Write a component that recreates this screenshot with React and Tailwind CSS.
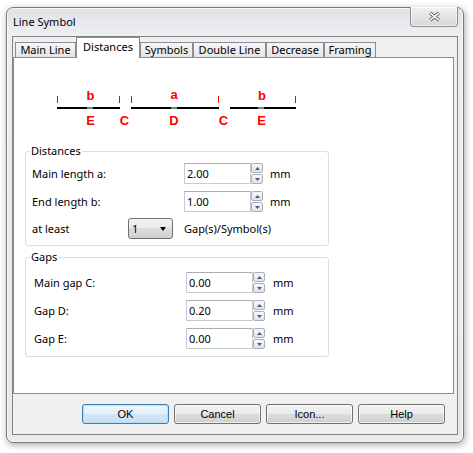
// Line Symbol dialog – "Distances" tab
function Spinner() {
  return (
    <div className="flex flex-col gap-px w-[12px] h-[21px]">
      <div className="h-[10px] border border-[#a9afb8] rounded-[2px] bg-[linear-gradient(to_bottom,#f7f8fa,#dfe4ea)] flex items-center justify-center">
        <svg width="5" height="3" viewBox="0 0 5 3">
          <path d="M2.5 0L5 3H0z" fill="#4a5a78" />
        </svg>
      </div>
      <div className="h-[10px] border border-[#a9afb8] rounded-[2px] bg-[linear-gradient(to_bottom,#f7f8fa,#dfe4ea)] flex items-center justify-center">
        <svg width="5" height="3" viewBox="0 0 5 3">
          <path d="M0 0H5L2.5 3z" fill="#4a5a78" />
        </svg>
      </div>
    </div>
  );
}

function NumberField({ value }) {
  return (
    <div className="flex items-center">
      <div className="w-[67px] h-[21px] border border-[#c5cad0] border-t-[#abadb3] bg-white flex items-center pl-[2px] leading-[16px]">
        {value}
      </div>
      <Spinner />
    </div>
  );
}

function Row({ label, value, labelW, gap, className = "" }) {
  return (
    <div className={"flex items-center h-[21px] " + className}>
      <span className={labelW + " leading-[16px]"}>{label}</span>
      <NumberField value={value} />
      <span className={gap + " leading-[16px]"}>mm</span>
    </div>
  );
}

function Tab({ label, w, active }) {
  if (active) {
    return (
      <div
        className={
          w +
          " h-[21px] -mb-px relative z-10 bg-white border border-b-0 border-[#898c95] flex justify-center pt-[1px] leading-[16px]"
        }
      >
        {label}
      </div>
    );
  }
  return (
    <div
      className={
        w +
        " h-[15px] border border-b-0 border-[#898c95] bg-[linear-gradient(to_bottom,#f6f6f6,#e6e6e6)] flex justify-center items-center leading-[16px]"
      }
    >
      {label}
    </div>
  );
}

function Button({ label, primary }) {
  return (
    <div
      className={
        "w-[87px] h-[20px] rounded-[3px] border flex items-center justify-center font-['Liberation_Sans',sans-serif] text-[11px] " +
        (primary
          ? "border-[#3c7fb1] bg-[linear-gradient(to_bottom,#eef6fc,#e3f0fa_50%,#d2e6f6_50%,#c8e0f3)] shadow-[inset_0_0_0_1px_rgba(170,220,250,0.8)]"
          : "border-[#707070] bg-[linear-gradient(to_bottom,#f2f2f2,#ebebeb_50%,#dddddd_50%,#cfcfcf)] shadow-[inset_0_0_0_1px_rgba(255,255,255,0.7)]")
      }
    >
      {label}
    </div>
  );
}

function Diagram() {
  const red = "#ff0000";
  return (
    <svg
      width="260"
      height="45"
      viewBox="0 0 260 45"
      className="block ml-[36px] mt-[27px] font-['Liberation_Sans',sans-serif]"
    >
      <g shapeRendering="crispEdges">
        {/* line segments */}
        <rect x="7" y="22" width="63" height="2" fill="#000" />
        <rect x="81" y="22" width="88" height="2" fill="#000" />
        <rect x="180" y="22" width="66" height="2" fill="#000" />
        {/* gap markers */}
        <rect x="37" y="22" width="6" height="2" fill="#808080" />
        <rect x="121" y="22" width="6" height="2" fill="#808080" />
        <rect x="208" y="22" width="6" height="2" fill="#808080" />
        {/* end ticks */}
        <rect x="7" y="11" width="1" height="7" fill={red} />
        <rect x="69" y="11" width="1" height="7" fill={red} />
        <rect x="81" y="11" width="1" height="7" fill={red} />
        <rect x="168" y="11" width="1" height="7" fill={red} />
        <rect x="245" y="11" width="1" height="7" fill={red} />
      </g>
      <g fill={red} fontWeight="700" fontSize="13" textAnchor="middle">
        <text x="40.5" y="15">b</text>
        <text x="124" y="14">a</text>
        <text x="212" y="15">b</text>
        <text x="40.5" y="40">E</text>
        <text x="74.5" y="40">C</text>
        <text x="124" y="40">D</text>
        <text x="173.5" y="40">C</text>
        <text x="211.5" y="40">E</text>
      </g>
    </svg>
  );
}

export default function App() {
  return (
    <div className="w-[473px] h-[453px] bg-white pt-[7px] pl-[6px] font-['Noto_Sans',sans-serif] text-[11px] text-black">
      <div className="w-[458px] h-[436px] rounded-[7px] border border-[#7a7a7a] bg-[linear-gradient(to_bottom,#dfe2e6,#eceef0_26px,#e9e9e9)] shadow-[inset_0_0_0_1px_rgba(255,255,255,0.7),1px_2px_7px_rgba(0,0,0,0.35)] flex flex-col px-[5px] pb-[7px]">
        {/* title bar */}
        <div className="h-[28px] flex items-start shrink-0">
          <span className="ml-[1px] mt-[6px] leading-[16px]">Line Symbol</span>
          <div className="ml-auto -mt-px w-[48px] h-[20px] rounded-b-[4px] border border-t-0 border-[#8d8d8d] bg-[linear-gradient(to_bottom,#f3f3f3,#e4e4e4_50%,#d8d8d8)] shadow-[inset_0_0_0_1px_rgba(255,255,255,0.6)] flex items-center justify-center">
            <svg width="13" height="11" viewBox="0 0 13 11">
              <path d="M2 1.8L11 9.2M11 1.8L2 9.2" stroke="#5a5a5a" strokeWidth="3.4" />
              <path d="M2 1.8L11 9.2M11 1.8L2 9.2" stroke="#ffffff" strokeWidth="1.5" />
            </svg>
          </div>
        </div>

        {/* client area */}
        <div className="flex-1 border border-[#828282] bg-[#f0f0f0] flex flex-col">
          <div className="h-[20px] pl-[2px] flex items-end shrink-0">
            <Tab label="Main Line" w="w-[61px]" />
            <Tab label="Distances" w="w-[64px]" active />
            <Tab label="Symbols" w="w-[53px]" />
            <Tab label="Double Line" w="w-[73px]" />
            <Tab label="Decrease" w="w-[58px]" />
            <Tab label="Framing" w="w-[52px]" />
          </div>

          <div className="w-[441px] h-[337px] border border-[#898c95] bg-white shrink-0">
            <Diagram />

            <fieldset className="ml-[11px] mt-[13px] w-[304px] border border-[#d5dfe5] rounded-[3px] pl-[6px] pt-[4px] pb-[6px]">
              <legend className="-ml-[2px] px-[1px] leading-[16px]">Distances</legend>
              <Row label="Main length a:" value="2.00" labelW="w-[152px]" gap="ml-[7px]" />
              <Row label="End length b:" value="1.00" labelW="w-[152px]" gap="ml-[7px]" className="mt-[7px]" />
              <div className="flex items-center h-[21px] mt-[6px]">
                <span className="w-[96px] leading-[16px]">at least</span>
                <div className="w-[45px] h-[21px] rounded-[3px] border border-[#707070] bg-[linear-gradient(to_bottom,#f2f2f2,#ebebeb_50%,#dddddd_50%,#cfcfcf)] flex items-center pl-[3px] pr-[6px] leading-[16px]">
                  <span>1</span>
                  <svg className="ml-auto" width="6" height="4" viewBox="0 0 6 4">
                    <path d="M0 0H6L3 4z" fill="#000" />
                  </svg>
                </div>
                <span className="ml-[11px] leading-[16px]">Gap(s)/Symbol(s)</span>
              </div>
            </fieldset>

            <fieldset className="ml-[11px] mt-[3px] w-[304px] border border-[#d5dfe5] rounded-[3px] pl-[8px] pt-[7px] pb-[7px]">
              <legend className="-ml-[4px] px-[1px] leading-[16px]">Gaps</legend>
              <Row label="Main gap C:" value="0.00" labelW="w-[152px]" gap="ml-[8px]" />
              <Row label="Gap D:" value="0.20" labelW="w-[152px]" gap="ml-[8px]" className="mt-[7px]" />
              <Row label="Gap E:" value="0.00" labelW="w-[152px]" gap="ml-[8px]" className="mt-[7px]" />
            </fieldset>
          </div>

          <div className="mt-[10px] pl-[69px] flex gap-[5px]">
            <Button label="OK" primary />
            <Button label="Cancel" />
            <Button label="Icon..." />
            <Button label="Help" />
          </div>
        </div>
      </div>
    </div>
  );
}
